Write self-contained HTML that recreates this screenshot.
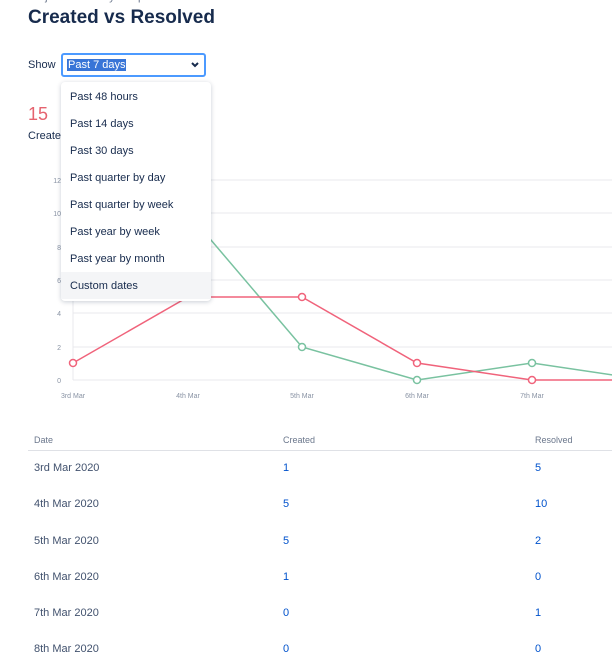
<!DOCTYPE html><html><head><style>
body{margin:0;width:612px;height:670px;overflow:hidden;background:#fff;font-family:"Liberation Sans",sans-serif;color:#172b4d;position:relative}
.a{position:absolute;white-space:nowrap}
h1{position:absolute;left:28px;top:7px;margin:0;font-size:19px;font-weight:600;color:#172b4d}
.sel{position:absolute;left:61px;top:53px;width:145px;height:24px;border:2px solid #4c9aff;border-radius:3px;box-sizing:border-box}
.dd{position:absolute;left:61px;top:82px;width:150px;height:219px;background:#fff;border-radius:4px;box-shadow:0 1px 5px rgba(9,30,66,.22)}
.dd div{height:27px;line-height:28px;padding-left:9px;font-size:11px;color:#172b4d}
.th{font-size:9px;color:#6b778c}
.td{font-size:11px;color:#42526e}
.n{font-size:11px;color:#0052cc}
</style></head><body>
<div class="a" style="left:28px;top:-9px;font-size:11px;color:#6b778c">Projects / Dummy / Reports / Created</div>
<h1>Created vs Resolved</h1>
<div class="a" style="left:28px;top:59px;font-size:11px">Show</div>
<div class="sel"><span class="a" style="left:4px;top:4px;font-size:11px;background:#3875d7;color:#fff;padding:0 1px">Past 7 days</span>
<svg class="a" style="left:128px;top:7px" width="8" height="6"><path d="M1 1L4 4L7 1" stroke="#172b4d" stroke-width="2" fill="none"/></svg></div>
<div class="a" style="left:28px;top:104px;font-size:18px;color:#e5636f">15</div>
<div class="a" style="left:28px;top:130px;font-size:11px">Created</div>
<svg class="a" style="left:0;top:170px" width="612" height="240">
<g stroke="#e8e8ec" stroke-width="1">
<line x1="73" x2="612" y1="10" y2="10"/><line x1="73" x2="612" y1="43" y2="43"/><line x1="73" x2="612" y1="77" y2="77"/><line x1="73" x2="612" y1="110" y2="110"/><line x1="73" x2="612" y1="143" y2="143"/><line x1="73" x2="612" y1="177" y2="177"/><line x1="73" x2="612" y1="210" y2="210"/><line x1="73" x2="73" y1="10" y2="210"/></g>
<g font-size="7" fill="#8993a4" font-family="Liberation Sans" text-anchor="end">
<text x="61" y="13">12</text><text x="61" y="46">10</text><text x="61" y="80">8</text><text x="61" y="113">6</text><text x="61" y="146">4</text><text x="61" y="180">2</text><text x="61" y="213">0</text></g>
<g font-size="7" fill="#8993a4" font-family="Liberation Sans" text-anchor="middle">
<text x="73" y="228">3rd Mar</text><text x="188" y="228">4th Mar</text><text x="302" y="228">5th Mar</text><text x="417" y="228">6th Mar</text><text x="532" y="228">7th Mar</text></g>
<polyline points="73,127 188,43 302,177 417,210 532,193 647,210" fill="none" stroke="#79c2a0" stroke-width="1.5"/>
<polyline points="73,193 188,127 302,127 417,193 532,210 647,210" fill="none" stroke="#f0637b" stroke-width="1.5"/>
<g fill="#fff" stroke-width="1.5"><circle cx="302" cy="177" r="3.5" stroke="#79c2a0"/><circle cx="417" cy="210" r="3.5" stroke="#79c2a0"/><circle cx="532" cy="193" r="3.5" stroke="#79c2a0"/>
<circle cx="73" cy="193" r="3.5" stroke="#f0637b"/><circle cx="302" cy="127" r="3.5" stroke="#f0637b"/><circle cx="417" cy="193" r="3.5" stroke="#f0637b"/><circle cx="532" cy="210" r="3.5" stroke="#f0637b"/></g>
</svg>
<div class="dd"><div style="margin-top:1px">Past 48 hours</div><div>Past 14 days</div><div>Past 30 days</div><div>Past quarter by day</div><div>Past quarter by week</div><div>Past year by week</div><div>Past year by month</div><div style="background:#f4f5f7">Custom dates</div></div>
<div class="a th" style="left:34px;top:435px">Date</div><div class="a th" style="left:283px;top:435px">Created</div><div class="a th" style="left:535px;top:435px">Resolved</div>
<div class="a" style="left:28px;top:450px;width:584px;height:1px;background:#dfe1e6"></div>
<div class="a td" style="left:34px;top:462px">3rd Mar 2020</div><div class="a n" style="left:283px;top:462px">1</div><div class="a n" style="left:535px;top:462px">5</div>
<div class="a td" style="left:34px;top:498px">4th Mar 2020</div><div class="a n" style="left:283px;top:498px">5</div><div class="a n" style="left:535px;top:498px">10</div>
<div class="a td" style="left:34px;top:535px">5th Mar 2020</div><div class="a n" style="left:283px;top:535px">5</div><div class="a n" style="left:535px;top:535px">2</div>
<div class="a td" style="left:34px;top:571px">6th Mar 2020</div><div class="a n" style="left:283px;top:571px">1</div><div class="a n" style="left:535px;top:571px">0</div>
<div class="a td" style="left:34px;top:607px">7th Mar 2020</div><div class="a n" style="left:283px;top:607px">0</div><div class="a n" style="left:535px;top:607px">1</div>
<div class="a td" style="left:34px;top:643px">8th Mar 2020</div><div class="a n" style="left:283px;top:643px">0</div><div class="a n" style="left:535px;top:643px">0</div>
</body></html>
